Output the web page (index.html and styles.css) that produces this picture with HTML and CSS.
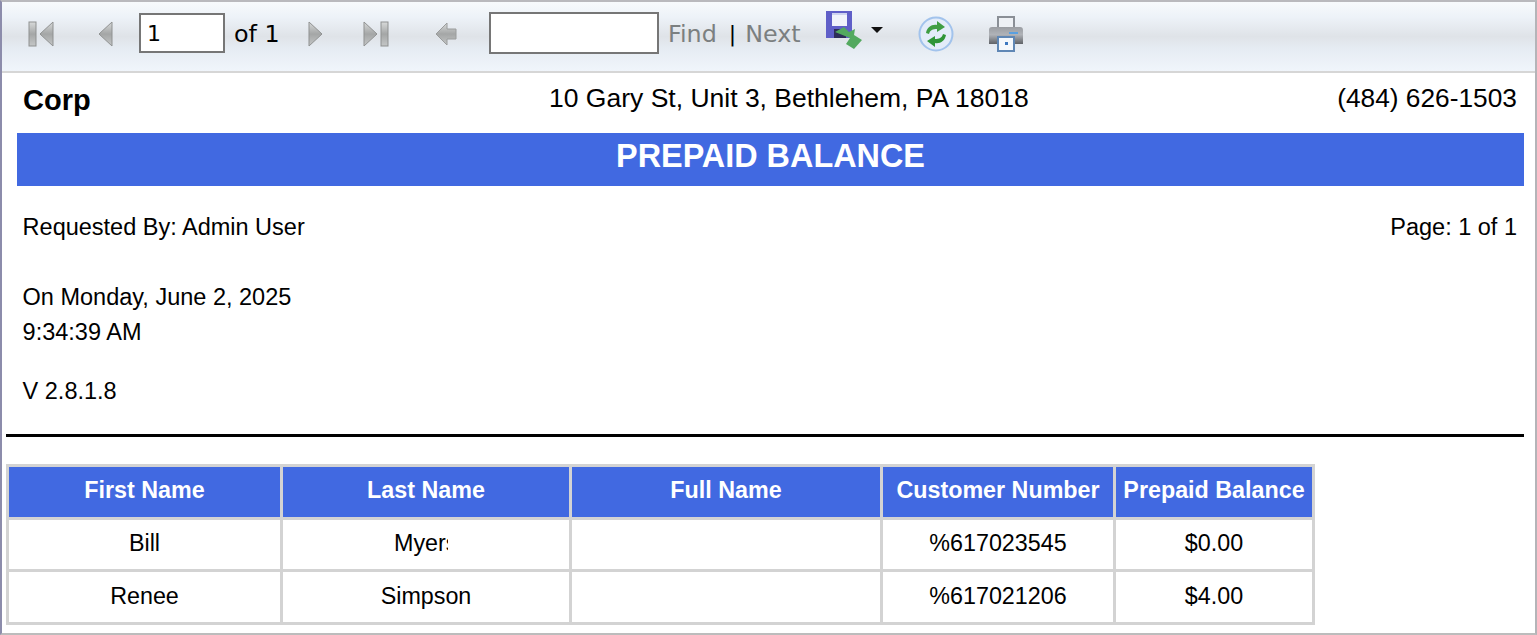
FILE: index.html
```html
<!DOCTYPE html>
<html lang="en">
<head>
<meta charset="utf-8">
<title>Prepaid Balance</title>
<link rel="stylesheet" href="styles.css">
</head>
<body>
<div class="frame">
  <div class="toolbar">
    <svg class="ic ic-first" viewBox="0 0 26 26"><defs><linearGradient id="g" x1="0" y1="0" x2="0" y2="1"><stop offset="0" stop-color="#d8dada"/><stop offset=".5" stop-color="#a4a6a6"/><stop offset="1" stop-color="#c4c6c6"/></linearGradient><linearGradient id="p" x1="0" y1="0" x2="0" y2="1"><stop offset="0" stop-color="#9a9da2"/><stop offset=".45" stop-color="#b0b3b8"/><stop offset="1" stop-color="#5f6267"/></linearGradient></defs><rect x="1" y="1" width="7" height="24" fill="url(#g)" stroke="#8f9191"/><path d="M25 1V25L12 13Z" fill="url(#g)" stroke="#8f9191"/></svg>
    <svg class="ic ic-prev" viewBox="0 0 16 26"><path d="M15 1V25L2 13Z" fill="url(#g)" stroke="#8f9191"/></svg>
    <input class="page-input" type="text" value="1">
    <span class="of">of 1</span>
    <svg class="ic ic-next" viewBox="0 0 16 26"><path d="M1 1V25L14 13Z" fill="url(#g)" stroke="#8f9191"/></svg>
    <svg class="ic ic-last" viewBox="0 0 26 26"><path d="M1 1V25L14 13Z" fill="url(#g)" stroke="#8f9191"/><rect x="18" y="1" width="7" height="24" fill="url(#g)" stroke="#8f9191"/></svg>
    <svg class="ic ic-back" viewBox="0 0 22 24"><path d="M1 12L12 1V7H21V17H12V23Z" fill="url(#g)" stroke="#9a9c9c"/></svg>
    <input class="find-input" type="text">
    <span class="find">Find</span>
    <span class="sep">|</span>
    <span class="next">Next</span>
    <svg class="ic ic-save" viewBox="0 0 36 38"><path d="M0 0H26V27H0Z" fill="#5f5fc8"/><rect x="6" y="2" width="15" height="13" fill="#f0f3fb"/><rect x="6" y="2" width="15" height="2" fill="#cdd3ef"/><rect x="8" y="18" width="12" height="9" fill="#2d2d58"/><path d="M9 21L18 16L23 21L29 18L28 24L36 29L28 38L20 33L24 27Z" fill="#53a95f"/></svg>
    <svg class="ic ic-caret" viewBox="0 0 12 6"><path d="M0 0H12L6 6Z" fill="#111"/></svg>
    <svg class="ic ic-refresh" viewBox="0 0 36 36"><circle cx="18" cy="18" r="16.5" fill="#e3ecf9" stroke="#a2c3ec" stroke-width="2"/><path d="M8 17C9 11 14 8 19 9V5L27 11L19 16V13C15 13 12 14 11 18Z" fill="#3f9d43"/><path d="M28 19C27 25 22 28 17 27V31L9 25L17 20V23C21 23 24 22 25 18Z" fill="#2f9538"/></svg>
    <svg class="ic ic-print" viewBox="0 0 36 36"><rect x="10" y="1" width="16" height="12" fill="#eef1f5" stroke="#8a8f96" stroke-width="2"/><path d="M1 14Q1 11 4 11H32Q35 11 35 14V28H1Z" fill="url(#p)"/><rect x="21" y="16" width="9" height="2" fill="#5aa0e0"/><rect x="10" y="21" width="16" height="14" fill="#f4f8fc" stroke="#5f87b5" stroke-width="2"/><rect x="17" y="26" width="3" height="3" fill="#3d78c0"/></svg>
  </div>
  <main class="report">
    <div class="head-row">
      <strong class="corp">Corp</strong>
      <span class="address">10 Gary St, Unit 3, Bethlehem, PA 18018</span>
      <span class="phone">(484) 626-1503</span>
    </div>
    <h1 class="banner">PREPAID BALANCE</h1>
    <div class="meta-row">
      <span>Requested By: Admin User</span>
      <span>Page: 1 of 1</span>
    </div>
    <p class="line line-date">On Monday, June 2, 2025</p>
    <p class="line line-time">9:34:39 AM</p>
    <p class="line line-version">V 2.8.1.8</p>
    <hr class="rule">
    <table class="data">
      <colgroup><col class="c1"><col class="c2"><col class="c3"><col class="c4"><col class="c5"></colgroup>
      <thead>
        <tr><th>First Name</th><th>Last Name</th><th>Full Name</th><th>Customer Number</th><th>Prepaid Balance</th></tr>
      </thead>
      <tbody>
        <tr class="row-short"><td>Bill</td><td><span class="clip">Myers</span></td><td></td><td>%617023545</td><td>$0.00</td></tr>
        <tr class="row-last"><td>Renee</td><td>Simpson</td><td></td><td>%617021206</td><td>$4.00</td></tr>
      </tbody>
    </table>
  </main>
</div>
</body>
</html>
```
FILE: styles.css
```css
* { box-sizing: border-box; }
html, body { margin: 0; height: 100%; overflow: hidden; background: #fff; }
body { font-family: "Liberation Sans", Arial, sans-serif; color: #000; }

.frame {
  width: 1537px;
  height: 635px;
  border-top: 2px solid #b9b9bd;
  border-left: 2px solid #8c8cab;
  border-right: 2px solid #b4b4b8;
  border-bottom: 2px solid #bcbcbc;
  overflow: hidden;
}

.toolbar {
  display: flex;
  align-items: flex-start;
  height: 71px;
  padding-left: 26px;
  border-bottom: 2px solid #d6d6d6;
  background: linear-gradient(#f7fafc 0%, #edf2f8 22%, #dfe3e8 50%, #e6ecf3 68%, #f0f5fb 100%);
  font-family: "DejaVu Sans", Verdana, sans-serif;
  font-size: 23.8px;
  line-height: 28px;
}
.ic { display: block; flex: none; filter: blur(.6px); }
.ic-first { width: 26px; height: 26px; margin-top: 19px; }
.ic-prev { width: 16px; height: 26px; margin: 19px 0 0 43px; }
.page-input, .find-input {
  flex: none;
  border: 2px solid #767676;
  background: #fff;
  font-family: inherit;
  font-size: 22px;
  padding: 0 6px;
  color: #000;
  outline: 0;
  border-radius: 0;
}
.page-input { width: 86px; height: 40px; margin: 11px 0 0 26px; }
.of { margin: 18px 0 0 9px; width: 45px; white-space: nowrap; }
.ic-next { width: 16px; height: 26px; margin: 19px 0 0 29px; }
.ic-last { width: 26px; height: 26px; margin: 19px 0 0 39px; }
.ic-back { width: 22px; height: 24px; margin: 20px 0 0 46px; }
.find-input { width: 170px; height: 42px; margin: 10px 0 0 32px; }
.find { margin: 18px 0 0 9px; color: #7b7f80; }
.sep { margin: 18px 0 0 12px; color: #000; font-size: 22px; }
.next { margin: 18px 0 0 9px; color: #7b7f80; }
.ic-save { width: 36px; height: 38px; margin: 9px 0 0 25px; }
.ic-caret { width: 12px; height: 6px; margin: 25px 0 0 9px; }
.ic-refresh { width: 36px; height: 36px; margin: 14px 0 0 35px; }
.ic-print { width: 36px; height: 36px; margin: 14px 0 0 34px; }

.report { font-size: 23.5px; }
.head-row {
  display: flex;
  align-items: flex-start;
  height: 60px;
  padding: 10px 18px 0 21px;
  font-size: 26.5px;
  line-height: 30px;
}
.corp { width: 526px; font-size: 29px; line-height: 34px; flex: none; }
.phone { margin-left: auto; font-size: 26.3px; }
.banner {
  margin: 0 11px 0 15px;
  height: 53px;
  background: #4169e1;
  color: #fff;
  font-size: 32.4px;
  line-height: 46px;
  font-weight: 700;
  text-align: center;
}
.meta-row {
  display: flex;
  justify-content: space-between;
  padding: 27px 18px 0 20.6px;
  line-height: 28px;
}
.line { margin: 0; padding-left: 20.6px; line-height: 28px; }
.line-date { margin-top: 42px; }
.line-time { margin-top: 7px; }
.line-version { margin-top: 31px; }
.rule {
  margin: 29px 11px 0 4px;
  height: 3px;
  border: 0;
  background: #000;
}
.data {
  margin: 27px 0 0 4px;
  width: 1306px;
  table-layout: fixed;
  border-collapse: collapse;
  border: 3px solid #d3d3d3;
}
.data th, .data td {
  border: 3px solid #d3d3d3;
  text-align: center;
  padding: 0 0 3px;
  white-space: nowrap;
}
.data th {
  height: 53px;
  background: #4169e1;
  color: #fff;
  font-size: 23.3px;
}
.data td { height: 53px; font-size: 23.3px; }
.data .row-short td { height: 52px; padding-bottom: 2px; }
.data .row-last td { padding-bottom: 1px; }
.c1 { width: 274px; }
.c2 { width: 289px; }
.c3 { width: 311px; }
.c4 { width: 233px; }
.c5 { width: 199px; }
.clip {
  display: inline-block;
  width: 54px;
  margin-right: 10px;
  overflow: hidden;
  vertical-align: bottom;
  text-align: left;
}
```
